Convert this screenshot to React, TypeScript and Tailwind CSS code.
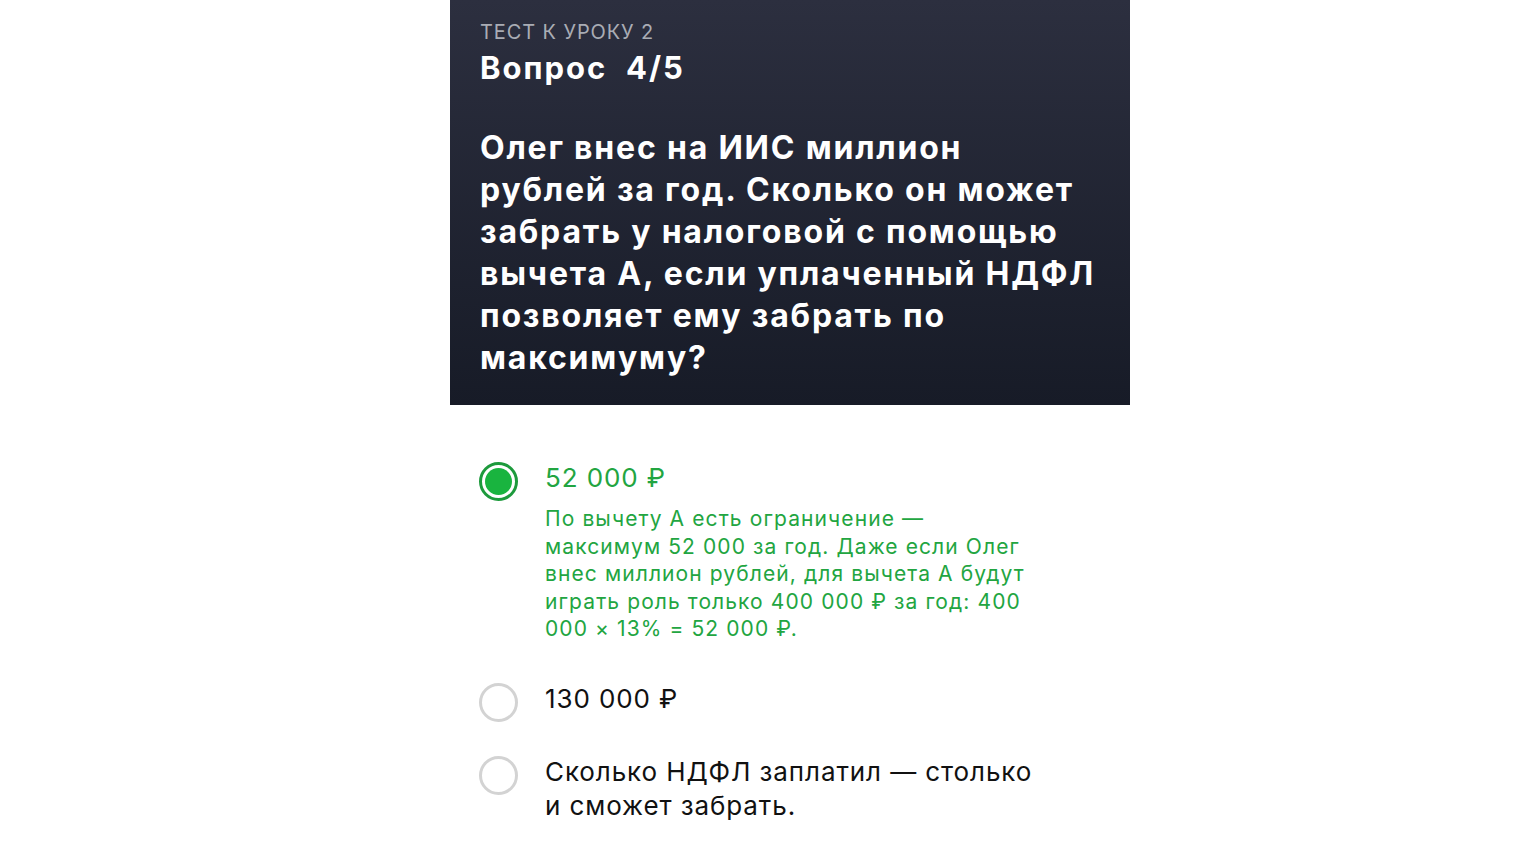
import React from "react"

const font = { fontFamily: "Inter, 'Noto Sans', sans-serif" }

type Option = {
  lines: string[]
  selected?: boolean
  note?: string[]
  spacing: string
}

const question = [
  "Олег внес на ИИС миллион",
  "рублей за год. Сколько он может",
  "забрать у налоговой с помощью",
  "вычета А, если уплаченный НДФЛ",
  "позволяет ему забрать по",
  "максимуму?",
]

const options: Option[] = [
  {
    lines: ["52 000 ₽"],
    selected: true,
    spacing: "mt-0",
    note: [
      "По вычету А есть ограничение —",
      "максимум 52 000 за год. Даже если Олег",
      "внес миллион рублей, для вычета А будут",
      "играть роль только 400 000 ₽ за год: 400",
      "000 × 13% = 52 000 ₽.",
    ],
  },
  { lines: ["130 000 ₽"], spacing: "mt-[38px]" },
  { lines: ["Сколько НДФЛ заплатил — столько", "и сможет забрать."], spacing: "mt-[32px]" },
]

function Radio({ selected }: { selected?: boolean }) {
  if (selected) {
    return (
      <div className="w-[39px] h-[39px] shrink-0 rounded-full border-[3px] border-[#1d9a3c] p-[3px]">
        <div className="w-full h-full rounded-full bg-[#19b43f]" />
      </div>
    )
  }
  return <div className="w-[39px] h-[39px] shrink-0 rounded-full border-[3px] border-[#d3d3d3]" />
}

export default function App() {
  return (
    <div className="min-h-screen bg-white" style={font}>
      <div className="w-[680px] ml-[450px]">
        {/* Question header */}
        <div className="bg-gradient-to-b from-[#2c2f3f] to-[#171b27] px-[30px] pt-[19px] pb-[26px]">
          <div className="text-[20px] leading-[26px] text-[#a9acb4] tracking-[0.9px]">ТЕСТ К УРОКУ 2</div>
          <div className="mt-[3px] text-[31px] leading-[40px] font-bold text-white tracking-[2px]">
            Вопрос&nbsp; 4/5
          </div>
          <div className="mt-[39px] text-[32px] leading-[42px] font-bold text-white tracking-[1.8px] whitespace-nowrap">
            {question.map((l) => (
              <div key={l}>{l}</div>
            ))}
          </div>
        </div>

        {/* Answers */}
        <div className="px-[29px] pt-[55px] flex flex-col">
          {options.map((o) => (
            <div key={o.lines[0]} className={`flex gap-[27px] ${o.spacing}`}>
              <div className="pt-[2px]">
                <Radio selected={o.selected} />
              </div>
              <div className="pt-[1px] whitespace-nowrap">
                <div
                  className={`text-[26px] leading-[34px] tracking-[0.9px] ${
                    o.selected ? "text-[#22a541]" : "text-[#111111]"
                  }`}
                >
                  {o.lines.map((l) => (
                    <div key={l}>{l}</div>
                  ))}
                </div>
                {o.note && (
                  <div className="mt-[10px] text-[21px] leading-[27.5px] text-[#22a541] tracking-[1.1px]">
                    {o.note.map((l) => (
                      <div key={l}>{l}</div>
                    ))}
                  </div>
                )}
              </div>
            </div>
          ))}
        </div>
      </div>
    </div>
  )
}
